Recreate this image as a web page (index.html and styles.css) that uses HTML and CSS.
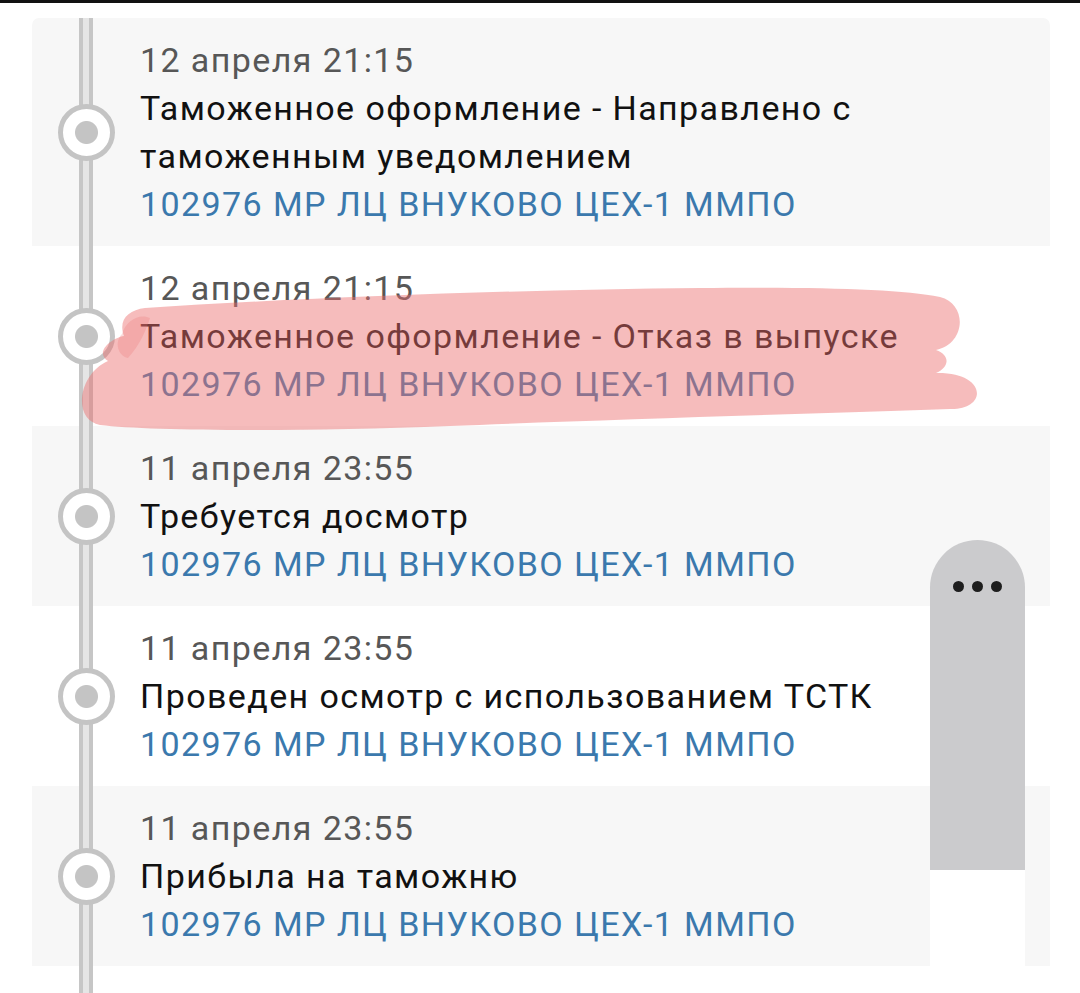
FILE: index.html
```html
<!DOCTYPE html>
<html lang="ru">
<head>
    <meta charset="UTF-8">
    <meta name="viewport" content="width=device-width, initial-scale=1.0">
    <title>Отслеживание отправления</title>
    <link rel="stylesheet" href="styles.css">
</head>
<body>

    <div class="page">
        <div class="topbar"></div>

        <div class="card">
            <!-- Tracking history -->
            <div class="event">
                <div class="rail"><span class="dot"></span></div>
                <div class="info">
                    <div class="date">12 апреля 21:15</div>
                    <div class="title">Таможенное оформление - Направлено с таможенным уведомлением</div>
                    <div class="place">102976 МР ЛЦ ВНУКОВО ЦЕХ-1 ММПО</div>
                </div>
            </div>

            <div class="event">
                <div class="rail"><span class="dot"></span></div>
                <div class="info">
                    <div class="date">12 апреля 21:15</div>
                    <div class="title">Таможенное оформление - Отказ в выпуске</div>
                    <div class="place">102976 МР ЛЦ ВНУКОВО ЦЕХ-1 ММПО</div>
                </div>
            </div>

            <div class="event">
                <div class="rail"><span class="dot"></span></div>
                <div class="info">
                    <div class="date">11 апреля 23:55</div>
                    <div class="title">Требуется досмотр</div>
                    <div class="place">102976 МР ЛЦ ВНУКОВО ЦЕХ-1 ММПО</div>
                </div>
            </div>

            <div class="event">
                <div class="rail"><span class="dot"></span></div>
                <div class="info">
                    <div class="date">11 апреля 23:55</div>
                    <div class="title">Проведен осмотр с использованием ТСТК</div>
                    <div class="place">102976 МР ЛЦ ВНУКОВО ЦЕХ-1 ММПО</div>
                </div>
            </div>

            <div class="event">
                <div class="rail"><span class="dot"></span></div>
                <div class="info">
                    <div class="date">11 апреля 23:55</div>
                    <div class="title">Прибыла на таможню</div>
                    <div class="place">102976 МР ЛЦ ВНУКОВО ЦЕХ-1 ММПО</div>
                </div>
            </div>

            <!-- next event, below the fold -->
            <div class="event event-empty">
                <div class="rail"></div>
            </div>
        </div>

        <!-- Marker scribble over the second event -->
        <svg class="scribble" width="1080" height="993" viewBox="0 0 1080 993">
            <path d="M 145 308 C 300 298, 500 290, 700 288 C 820 287, 900 289, 940 297 C 968 304, 966 344, 936 350 C 952 356, 948 368, 936 373 C 988 372, 988 410, 950 409 C 800 414, 600 420, 450 426 C 300 432, 150 431, 100 425 C 72 420, 78 374, 108 361 C 94 352, 112 338, 124 336 C 118 320, 128 310, 145 308 Z" />
            <path class="blob" d="M 122 334 C 126 320, 140 313, 150 318 C 146 330, 140 345, 128 358 C 118 356, 114 342, 122 334 Z" />
        </svg>

        <!-- Floating scroll handle -->
        <div class="handle">
            <div class="handle-thumb">
                <span></span><span></span><span></span>
            </div>
            <div class="handle-track"></div>
        </div>
    </div>

</body>
</html>
```

FILE: styles.css
```css
html, body {
    margin: 0;
    padding: 0;
    height: 993px;
    overflow: hidden;
    background-color: #fff;
}
.page {
    position: relative;
    width: 1080px;
    height: 993px;
    overflow: hidden;
    font-family: Roboto, "Noto Sans", sans-serif;
}
.topbar {
    height: 3px;
    background-color: #111;
}
.card {
    margin: 15px 0 0 32px;
    width: 1018px;
    border-radius: 7px 7px 0 0;
    overflow: hidden;
}
.event {
    display: flex;
    background-color: #f7f7f7;
}
.event:nth-child(even) {
    background-color: #fff;
}
.event-empty {
    height: 180px;
}
.rail {
    width: 108px;
    flex-shrink: 0;
    display: flex;
    align-items: center;
    background-image: linear-gradient(to right,
        transparent 47px, #c6c6c6 47px, #c6c6c6 51px,
        #e5e5e5 51px, #e5e5e5 57px,
        #c6c6c6 57px, #c6c6c6 61px, transparent 61px);
}
.dot {
    box-sizing: border-box;
    width: 57px;
    height: 57px;
    margin-left: 26px;
    border: 5px solid #c4c4c4;
    border-radius: 50%;
    background: radial-gradient(circle, #c4c4c4 0, #c4c4c4 11px, #fff 12px);
}
.info {
    padding: 18px 0;
    font-size: 34px;
    line-height: 48px;
    letter-spacing: 1.4px;
}
.date {
    color: #575757;
}
.title {
    color: #111;
    max-width: 780px;
}
.place {
    color: #3b79ad;
}
.scribble {
    position: absolute;
    left: 0;
    top: 0;
    pointer-events: none;
}
.scribble path {
    fill: #ec6e6e;
    fill-opacity: 0.46;
}
.scribble .blob {
    fill-opacity: 0.25;
}
.handle {
    position: absolute;
    left: 930px;
    top: 540px;
    width: 95px;
}
.handle-thumb {
    height: 330px;
    background-color: #cbcbcd;
    border-radius: 48px 48px 0 0;
    display: flex;
    justify-content: center;
    gap: 8px;
    padding-top: 41px;
    box-sizing: border-box;
}
.handle-thumb span {
    width: 11px;
    height: 11px;
    border-radius: 50%;
    background-color: #1e1e1e;
}
.handle-track {
    height: 130px;
    background-color: #fff;
}
```
